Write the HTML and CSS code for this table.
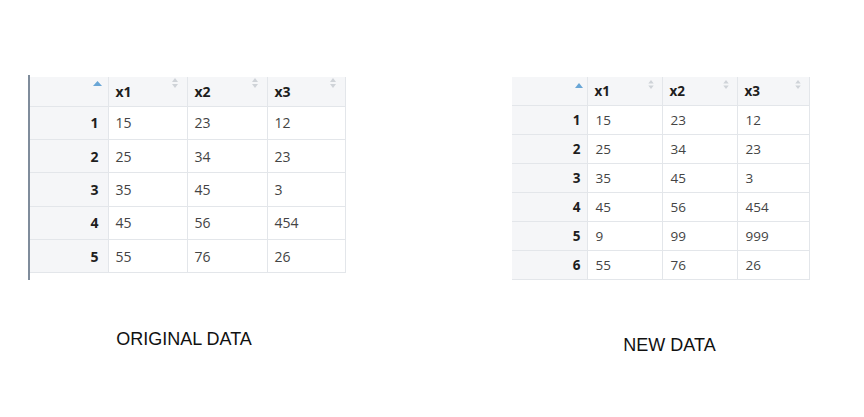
FILE: index.html
```html
<!DOCTYPE html>
<html>
<head>
<meta charset="utf-8">
<link rel="stylesheet" href="styles.css">
</head>
<body>
<div class="page">
  <div class="panel panel-left">
    <div class="frame">
      <table class="grid grid-big">
        <colgroup><col class="c-idx"><col class="c1"><col class="c2"><col class="c3"></colgroup>
        <thead>
          <tr>
            <th class="idx"><span class="asc"><svg width="9" height="5" viewBox="0 0 9 5"><path d="M0 5 L4.5 0 L9 5 Z" fill="#69a6d6"/></svg></span></th>
            <th><span class="hname">x1</span><span class="sort"><svg width="6" height="10" viewBox="0 0 6 10"><path d="M0 4 L3 0 L6 4 Z M0 6 L3 10 L6 6 Z" fill="#cfd3d8"/></svg></span></th>
            <th><span class="hname">x2</span><span class="sort"><svg width="6" height="10" viewBox="0 0 6 10"><path d="M0 4 L3 0 L6 4 Z M0 6 L3 10 L6 6 Z" fill="#cfd3d8"/></svg></span></th>
            <th><span class="hname">x3</span><span class="sort"><svg width="6" height="10" viewBox="0 0 6 10"><path d="M0 4 L3 0 L6 4 Z M0 6 L3 10 L6 6 Z" fill="#cfd3d8"/></svg></span></th>
          </tr>
        </thead>
        <tbody>
          <tr><td class="idx">1</td><td>15</td><td>23</td><td>12</td></tr>
          <tr><td class="idx">2</td><td>25</td><td>34</td><td>23</td></tr>
          <tr><td class="idx">3</td><td>35</td><td>45</td><td>3</td></tr>
          <tr><td class="idx">4</td><td>45</td><td>56</td><td>454</td></tr>
          <tr><td class="idx">5</td><td>55</td><td>76</td><td>26</td></tr>
        </tbody>
      </table>
    </div>
    <div class="caption caption-left">ORIGINAL DATA</div>
  </div>

  <div class="panel panel-right">
    <table class="grid grid-small">
      <colgroup><col class="c-idx"><col class="c1"><col class="c2"><col class="c3"></colgroup>
      <thead>
        <tr>
          <th class="idx"><span class="asc"><svg width="8" height="5" viewBox="0 0 8 5"><path d="M0 5 L4 0 L8 5 Z" fill="#69a6d6"/></svg></span></th>
          <th><span class="hname">x1</span><span class="sort"><svg width="6" height="9" viewBox="0 0 6 10"><path d="M0 4 L3 0 L6 4 Z M0 6 L3 10 L6 6 Z" fill="#cfd3d8"/></svg></span></th>
          <th><span class="hname">x2</span><span class="sort"><svg width="6" height="9" viewBox="0 0 6 10"><path d="M0 4 L3 0 L6 4 Z M0 6 L3 10 L6 6 Z" fill="#cfd3d8"/></svg></span></th>
          <th><span class="hname">x3</span><span class="sort"><svg width="6" height="9" viewBox="0 0 6 10"><path d="M0 4 L3 0 L6 4 Z M0 6 L3 10 L6 6 Z" fill="#cfd3d8"/></svg></span></th>
        </tr>
      </thead>
      <tbody>
        <tr><td class="idx">1</td><td>15</td><td>23</td><td>12</td></tr>
        <tr><td class="idx">2</td><td>25</td><td>34</td><td>23</td></tr>
        <tr><td class="idx">3</td><td>35</td><td>45</td><td>3</td></tr>
        <tr><td class="idx">4</td><td>45</td><td>56</td><td>454</td></tr>
        <tr><td class="idx">5</td><td>9</td><td>99</td><td>999</td></tr>
        <tr><td class="idx">6</td><td>55</td><td>76</td><td>26</td></tr>
      </tbody>
    </table>
    <div class="caption caption-right">NEW DATA</div>
  </div>
</div>
</body>
</html>
```

FILE: styles.css
```css
html, body {
  margin: 0;
  padding: 0;
  background: #ffffff;
}

.page {
  display: flex;
  align-items: flex-start;
  padding-top: 75px;
  width: 864px;
  height: 417px;
  box-sizing: border-box;
}

.panel {
  display: flex;
  flex-direction: column;
}

.panel-left {
  margin-left: 28px;
  width: 317px;
}

.panel-right {
  margin-left: 167px;
  padding-top: 2px;
  width: 297px;
}

.frame {
  border-left: 2px solid #7f8c9b;
  padding-top: 2px;
  padding-bottom: 7px;
}

.grid {
  border-collapse: collapse;
  table-layout: fixed;
  font-family: "Open Sans", "Noto Sans", sans-serif;
  color: #444;
}

.grid th, .grid td {
  border: 1px solid #e3e6ea;
  padding: 0;
  text-align: left;
  vertical-align: middle;
  white-space: nowrap;
}

.grid th {
  background: #f5f6f8;
  color: #1e1e1e;
  font-weight: 700;
  position: relative;
}

.grid .idx {
  background: #f5f6f8;
  color: #1e1e1e;
  font-weight: 700;
  text-align: right;
}

.grid thead tr th:first-child,
.grid tbody tr td:first-child {
  border-left: none;
}

.grid thead tr th {
  border-top: none;
}

.asc {
  position: absolute;
  display: flex;
}

.sort {
  position: absolute;
  display: flex;
}

/* big (original) table */
.grid-big {
  width: 315px;
  font-size: 14px;
}
.grid-big .c-idx { width: 78px; }
.grid-big .c1 { width: 79px; }
.grid-big .c2 { width: 80px; }
.grid-big .c3 { width: 78px; }
.grid-big thead tr { height: 29px; }
.grid-big tbody tr { height: 33.4px; }
.grid-big td { padding-left: 7px; }
.grid-big th { padding-left: 7px; }
.grid-big .idx { padding-right: 9px; padding-left: 0; }
.grid-big .asc { top: 4px; right: 6px; }
.grid-big .sort { right: 9px; top: 1px; }

/* small (new) table */
.grid-small {
  width: 297px;
  font-size: 13.5px;
}
.grid-small .c-idx { width: 75px; }
.grid-small .c1 { width: 75px; }
.grid-small .c2 { width: 75px; }
.grid-small .c3 { width: 72px; }
.grid-small thead tr { height: 28px; }
.grid-small tbody tr { height: 29px; }
.grid-small td { padding-left: 8px; }
.grid-small th { padding-left: 7px; }
.grid-small .idx { padding-right: 6px; padding-left: 0; }
.grid-small .asc { top: 6px; right: 4px; }
.grid-small .sort { right: 8px; top: 3px; }

.caption {
  font-family: "Liberation Sans", Arial, sans-serif;
  font-size: 18px;
  line-height: 20px;
  color: #111;
  text-align: center;
}

.caption-left {
  margin-top: 49px;
  padding-right: 5px;
}

.caption-right {
  margin-top: 55px;
  padding-left: 18px;
}
```
